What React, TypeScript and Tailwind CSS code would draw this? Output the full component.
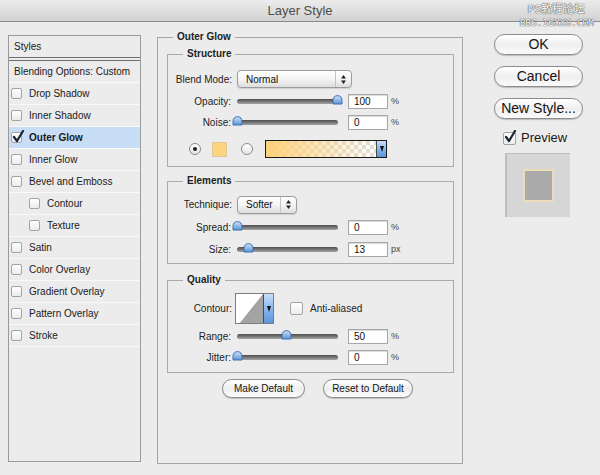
import type { ReactNode } from 'react';

const styleRows: { label: string; sub?: boolean; checked?: boolean }[] = [
  { label: 'Drop Shadow' },
  { label: 'Inner Shadow' },
  { label: 'Outer Glow', checked: true },
  { label: 'Inner Glow' },
  { label: 'Bevel and Emboss' },
  { label: 'Contour', sub: true },
  { label: 'Texture', sub: true },
  { label: 'Satin' },
  { label: 'Color Overlay' },
  { label: 'Gradient Overlay' },
  { label: 'Pattern Overlay' },
  { label: 'Stroke' },
];

function Check({ checked, size = 'sm' }: { checked?: boolean; size?: 'sm' | 'lg' }) {
  return (
    <span
      className={[
        'relative block flex-shrink-0 rounded-[2px] border border-[#a3a3a3] bg-linear-to-b from-white to-[#ececec]',
        size === 'lg' ? 'w-[13px] h-[13px]' : 'w-[11px] h-[11px]',
      ].join(' ')}
    >
      {checked && (
        <svg className="absolute -top-[3px] left-0" width="13" height="13" viewBox="0 0 13 13">
          <path d="M2 7 L5 11 L11 1" fill="none" stroke="#1b2233" strokeWidth="2.2" strokeLinecap="round" strokeLinejoin="round" />
        </svg>
      )}
    </span>
  );
}

function Thumb() {
  return (
    <svg width="11" height="10" viewBox="0 0 11 10">
      <defs>
        <linearGradient id="th" x1="0" y1="0" x2="0" y2="1">
          <stop offset="0" stopColor="#cfe2fa" />
          <stop offset="1" stopColor="#5b93d8" />
        </linearGradient>
      </defs>
      <path d="M1 9 V5.5 Q1 1 5.5 0.6 Q10 1 10 5.5 V9 Z" fill="url(#th)" stroke="#3f6fae" strokeWidth="1" />
    </svg>
  );
}

function Slider({ at }: { at: number }) {
  return (
    <div className="relative flex items-center w-[101px] h-[15px]">
      <div className="w-full h-[5px] rounded-full bg-linear-to-b from-[#4d4d4d] to-[#a5a5a5]" />
      <div className="absolute top-[1px]" style={{ left: at - 5 }}>
        <Thumb />
      </div>
    </div>
  );
}

function Field({ value }: { value: string }) {
  return (
    <div className="w-[40px] h-[15px] border border-[#a6a6a6] bg-white pl-[5px] text-[10px] leading-[13px] text-[#111] shadow-[inset_0_1px_1px_rgba(0,0,0,0.15)]">
      {value}
    </div>
  );
}

function Arrows() {
  return (
    <svg width="5" height="9" viewBox="0 0 5 9">
      <path d="M2.5 0 L5 3.5 H0 Z M0 5.5 H5 L2.5 9 Z" fill="#222" />
    </svg>
  );
}

function Select({ value, width }: { value: string; width: string }) {
  return (
    <div
      className={`${width} h-[18px] flex items-center rounded-[4px] border border-[#9b9b9b] bg-linear-to-b from-white via-[#f4f4f4] to-[#dedede] shadow-[0_1px_1px_rgba(0,0,0,0.12)]`}
    >
      <span className="flex-1 pl-[8px] text-[10px] text-[#111]">{value}</span>
      <span className="w-[16px] h-full flex items-center justify-center border-l border-[#c4c4c4]">
        <Arrows />
      </span>
    </div>
  );
}

function DropBtn() {
  return (
    <span className="w-[10px] h-full flex items-center justify-center bg-linear-to-b from-[#c8defa] via-[#8ab6ec] to-[#5d95dc] border-l border-[#4a4a4a]">
      <svg width="4" height="6" viewBox="0 0 4 6">
        <path d="M0 0 H4 L2 6 Z" fill="#111" />
      </svg>
    </span>
  );
}

function SliderRow({ label, value, at, unit }: { label: string; value: string; at: number; unit: string }) {
  return (
    <div className="flex items-center h-[15px]">
      <span className="w-[63px] text-right text-[10px] text-[#222]">{label}</span>
      <span className="ml-[6px]">
        <Slider at={at} />
      </span>
      <span className="ml-[10px]">
        <Field value={value} />
      </span>
      <span className="ml-[3px] text-[9px] text-[#444]">{unit}</span>
    </div>
  );
}

function Group({ title, className, children }: { title: string; className: string; children: ReactNode }) {
  return (
    <fieldset className={`w-[287px] border border-[#ababab] ${className}`}>
      <legend className="ml-[15px] px-[4px] text-[10px] leading-[12px] font-bold text-[#1e1e1e]">{title}</legend>
      {children}
    </fieldset>
  );
}

function PillButton({ children, className }: { children: ReactNode; className: string }) {
  return (
    <div
      className={`flex items-center justify-center rounded-full border border-[#8c8c8c] bg-linear-to-b from-white via-[#efefef] to-[#fafafa] shadow-[0_1px_1px_rgba(0,0,0,0.2)] text-[#141414] ${className}`}
    >
      {children}
    </div>
  );
}

export default function App() {
  return (
    <div className="relative w-[600px] h-[475px] overflow-hidden bg-[#ececec] font-['Liberation_Sans',Arial,sans-serif]">
      {/* Title bar */}
      <div className="h-[22px] flex items-center justify-center border-b border-[#8d8d8d] bg-linear-to-b from-[#ececec] to-[#d2d2d2]">
        <span className="text-[13px] text-[#4d4d4d]">Layer Style</span>
      </div>

      {/* watermark */}
      <div className="absolute right-[6px] top-[2px] flex flex-col items-end gap-[2px] text-white [text-shadow:0_0_1px_#333,0_0_1px_#333]">
        <span className="h-[13px] text-[11px] leading-[13px] font-['Noto_Sans_CJK_SC',sans-serif] mr-[9px]">PS教程论坛</span>
        <span className="h-[11px] text-[9.5px] leading-[11px] font-['DejaVu_Sans_Mono',monospace]">BBS.16XX8.COM</span>
      </div>

      <div className="flex items-start">
        {/* Styles list */}
        <div className="ml-[8px] mt-[13px] w-[133px] h-[427px] border border-[#9a9a9a] text-[10px] text-[#1a1a1a]">
          <div className="h-[25px] flex items-center pl-[5px] border-b-[4px] border-double border-[#6f6f6f]">Styles</div>
          <div className="h-[22px] flex items-center pl-[5px] border-b border-[#fafafa]">Blending Options: Custom</div>
          {styleRows.map((r) => (
            <div
              key={r.label}
              className={[
                'h-[22px] flex items-center border-b border-[#f9f9f9]',
                r.sub ? 'pl-[20px]' : 'pl-[2px]',
                r.checked ? 'bg-[#c8ddf6]' : '',
              ].join(' ')}
            >
              <Check checked={r.checked} />
              <span className={['ml-[7px]', r.checked ? 'font-bold' : ''].join(' ')}>{r.label}</span>
            </div>
          ))}
        </div>

        {/* Outer Glow */}
        <fieldset className="ml-[16px] mt-[9px] w-[306px] h-[433px] border border-[#a5a5a5] pl-[9px]">
          <legend className="ml-[6px] px-[4px] text-[10px] leading-[12px] font-bold text-[#1e1e1e]">Outer Glow</legend>

          <Group title="Structure" className="mt-[5px] h-[119px]">
            <div className="mt-[10px] flex items-center h-[18px]">
              <span className="w-[64px] text-right text-[10px] text-[#222]">Blend Mode:</span>
              <span className="ml-[5px]">
                <Select value="Normal" width="w-[115px]" />
              </span>
            </div>
            <div className="mt-[6px]">
              <SliderRow label="Opacity:" value="100" at={100} unit="%" />
            </div>
            <div className="mt-[6px]">
              <SliderRow label="Noise:" value="0" at={0} unit="%" />
            </div>
            <div className="mt-[10px] flex items-center h-[18px]">
              <span className="ml-[21px] w-[12px] h-[12px] rounded-full border border-[#8a8a8a] bg-linear-to-b from-white to-[#e6e6e6] flex items-center justify-center">
                <span className="w-[4px] h-[4px] rounded-full bg-[#222]" />
              </span>
              <span className="ml-[11px] w-[15px] h-[15px] bg-[#fcd47f] border border-[#e2c594]" />
              <span className="ml-[14px] w-[12px] h-[12px] rounded-full border border-[#8a8a8a] bg-linear-to-b from-white to-[#e6e6e6]" />
              <span className="ml-[12px] w-[122px] h-[18px] flex border border-[#1a1a1a] bg-[repeating-conic-gradient(#dedede_0%_25%,#ffffff_0%_50%)] bg-[length:8px_8px]">
                <span className="flex-1 bg-linear-to-r from-[#fdd17a] via-[#fdd17a]/50 to-transparent" />
                <DropBtn />
              </span>
            </div>
          </Group>

          <Group title="Elements" className="mt-[8px] h-[89px]">
            <div className="mt-[9px] flex items-center h-[17px]">
              <span className="w-[64px] text-right text-[10px] text-[#222]">Technique:</span>
              <span className="ml-[5px]">
                <Select value="Softer" width="w-[60px]" />
              </span>
            </div>
            <div className="mt-[7px]">
              <SliderRow label="Spread:" value="0" at={0} unit="%" />
            </div>
            <div className="mt-[7px]">
              <SliderRow label="Size:" value="13" at={11} unit="px" />
            </div>
          </Group>

          <Group title="Quality" className="mt-[10px] h-[99px]">
            <div className="mt-[7px] flex items-center h-[31px]">
              <span className="w-[64px] text-right text-[10px] text-[#222]">Contour:</span>
              <span className="ml-[3px] w-[39px] h-[31px] flex border border-[#7d7d7d] bg-white">
                <svg className="flex-1" viewBox="0 0 28 29" preserveAspectRatio="none">
                  <path d="M4 29 L28 0 L28 29 Z" fill="#a3a3a3" />
                </svg>
                <DropBtn />
              </span>
              <span className="ml-[16px]">
                <Check size="lg" />
              </span>
              <span className="ml-[7px] text-[10px] text-[#222]">Anti-aliased</span>
            </div>
            <div className="mt-[5px]">
              <SliderRow label="Range:" value="50" at={49} unit="%" />
            </div>
            <div className="mt-[6px]">
              <SliderRow label="Jitter:" value="0" at={0} unit="%" />
            </div>
          </Group>

          <div className="mt-[6px] flex justify-center gap-[18px] pl-[6px] text-[10px]">
            <PillButton className="w-[83px] h-[19px]">Make Default</PillButton>
            <PillButton className="w-[90px] h-[19px]">Reset to Default</PillButton>
          </div>
        </fieldset>

        {/* Right column */}
        <div className="ml-[31px] mt-[12px] flex flex-col">
          <PillButton className="w-[89px] h-[21px] text-[14px]">OK</PillButton>
          <PillButton className="mt-[11px] w-[89px] h-[21px] text-[14px]">Cancel</PillButton>
          <PillButton className="mt-[11px] w-[89px] h-[21px] text-[14px]">New Style...</PillButton>
          <div className="mt-[12px] ml-[9px] flex items-center h-[14px]">
            <Check checked size="lg" />
            <span className="ml-[5px] text-[13px] text-[#1a1a1a]">Preview</span>
          </div>
          <div className="mt-[8px] ml-[11px] w-[65px] h-[64px] flex items-center justify-center bg-[#d6d6d6] border-l-2 border-t border-[#bdbdbd]">
            <div className="w-[31px] h-[33px] bg-[#ababab] border-2 border-[#ecdcb9]" />
          </div>
        </div>
      </div>
    </div>
  );
}
